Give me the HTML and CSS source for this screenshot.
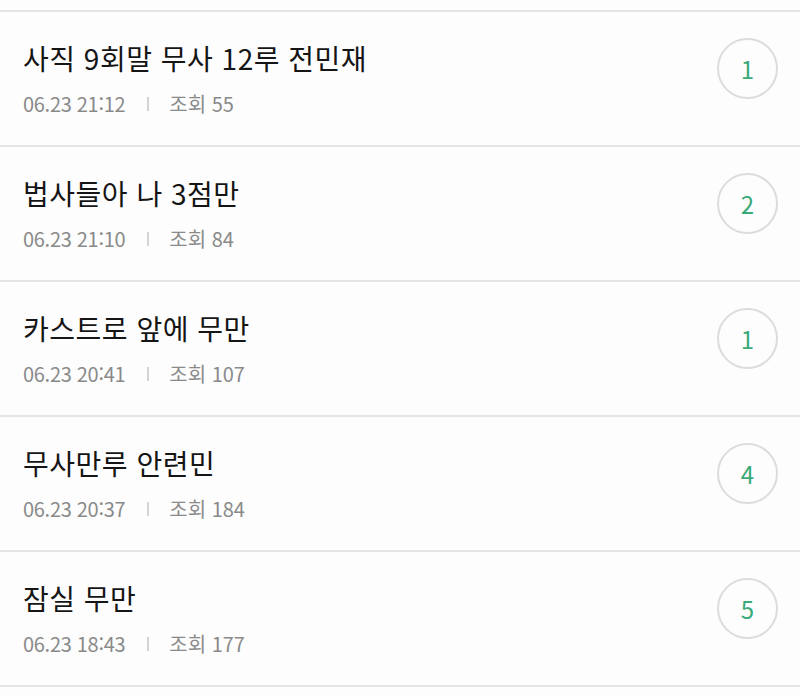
FILE: index.html
```html
<!DOCTYPE html>
<html lang="ko">
<head>
    <meta charset="UTF-8">
    <meta name="viewport" content="width=device-width, initial-scale=1.0">
    <title>게시글 목록</title>
    <link rel="stylesheet" href="styles.css">
</head>
<body>
    <ul class="post-list">
        <li class="post">
            <div class="post-info">
                <h3 class="post-title">사직 9회말 무사 12루 전민재</h3>
                <div class="post-meta">
                    <span class="date">06.23 21:12</span>
                    <span class="divider"></span>
                    <span class="views">조회 55</span>
                </div>
            </div>
            <div class="comments">1</div>
        </li>
        <li class="post">
            <div class="post-info">
                <h3 class="post-title">법사들아 나 3점만</h3>
                <div class="post-meta">
                    <span class="date">06.23 21:10</span>
                    <span class="divider"></span>
                    <span class="views">조회 84</span>
                </div>
            </div>
            <div class="comments">2</div>
        </li>
        <li class="post">
            <div class="post-info">
                <h3 class="post-title">카스트로 앞에 무만</h3>
                <div class="post-meta">
                    <span class="date">06.23 20:41</span>
                    <span class="divider"></span>
                    <span class="views">조회 107</span>
                </div>
            </div>
            <div class="comments">1</div>
        </li>
        <li class="post">
            <div class="post-info">
                <h3 class="post-title">무사만루 안련민</h3>
                <div class="post-meta">
                    <span class="date">06.23 20:37</span>
                    <span class="divider"></span>
                    <span class="views">조회 184</span>
                </div>
            </div>
            <div class="comments">4</div>
        </li>
        <li class="post">
            <div class="post-info">
                <h3 class="post-title">잠실 무만</h3>
                <div class="post-meta">
                    <span class="date">06.23 18:43</span>
                    <span class="divider"></span>
                    <span class="views">조회 177</span>
                </div>
            </div>
            <div class="comments">5</div>
        </li>
    </ul>
</body>
</html>
```

FILE: styles.css
```css
* {
    margin: 0;
    padding: 0;
    box-sizing: border-box;
    font-family: "Noto Sans CJK KR", "Noto Sans", sans-serif;
}
body {
    background-color: #fdfdfd;
}
.post-list {
    list-style: none;
    padding-top: 10px;
}
.post {
    display: flex;
    justify-content: space-between;
    align-items: flex-start;
    height: 135px;
    padding: 0 23px;
    border-top: 2px solid #e5e5e5;
}
.post:last-child {
    height: 137px;
    border-bottom: 2px solid #e5e5e5;
}
.post-info {
    padding-top: 26px;
}
.post-title {
    font-size: 28px;
    font-weight: 400;
    color: #151515;
    line-height: 40px;
    letter-spacing: 0.5px;
}
.post-meta {
    display: flex;
    align-items: center;
    margin-top: 13px;
    font-size: 20px;
    color: #8a8a8a;
    line-height: 26px;
}
.date {
    letter-spacing: -0.3px;
}
.divider {
    width: 2px;
    height: 14px;
    background: #d4d4d4;
    margin: 0 20px 0 22px;
}
.comments {
    width: 61px;
    height: 61px;
    margin-top: 26px;
    margin-right: -1px;
    border: 2px solid #dcdcdc;
    border-radius: 50%;
    display: flex;
    align-items: center;
    justify-content: center;
    font-size: 24px;
    color: #3aaa78;
}
```
